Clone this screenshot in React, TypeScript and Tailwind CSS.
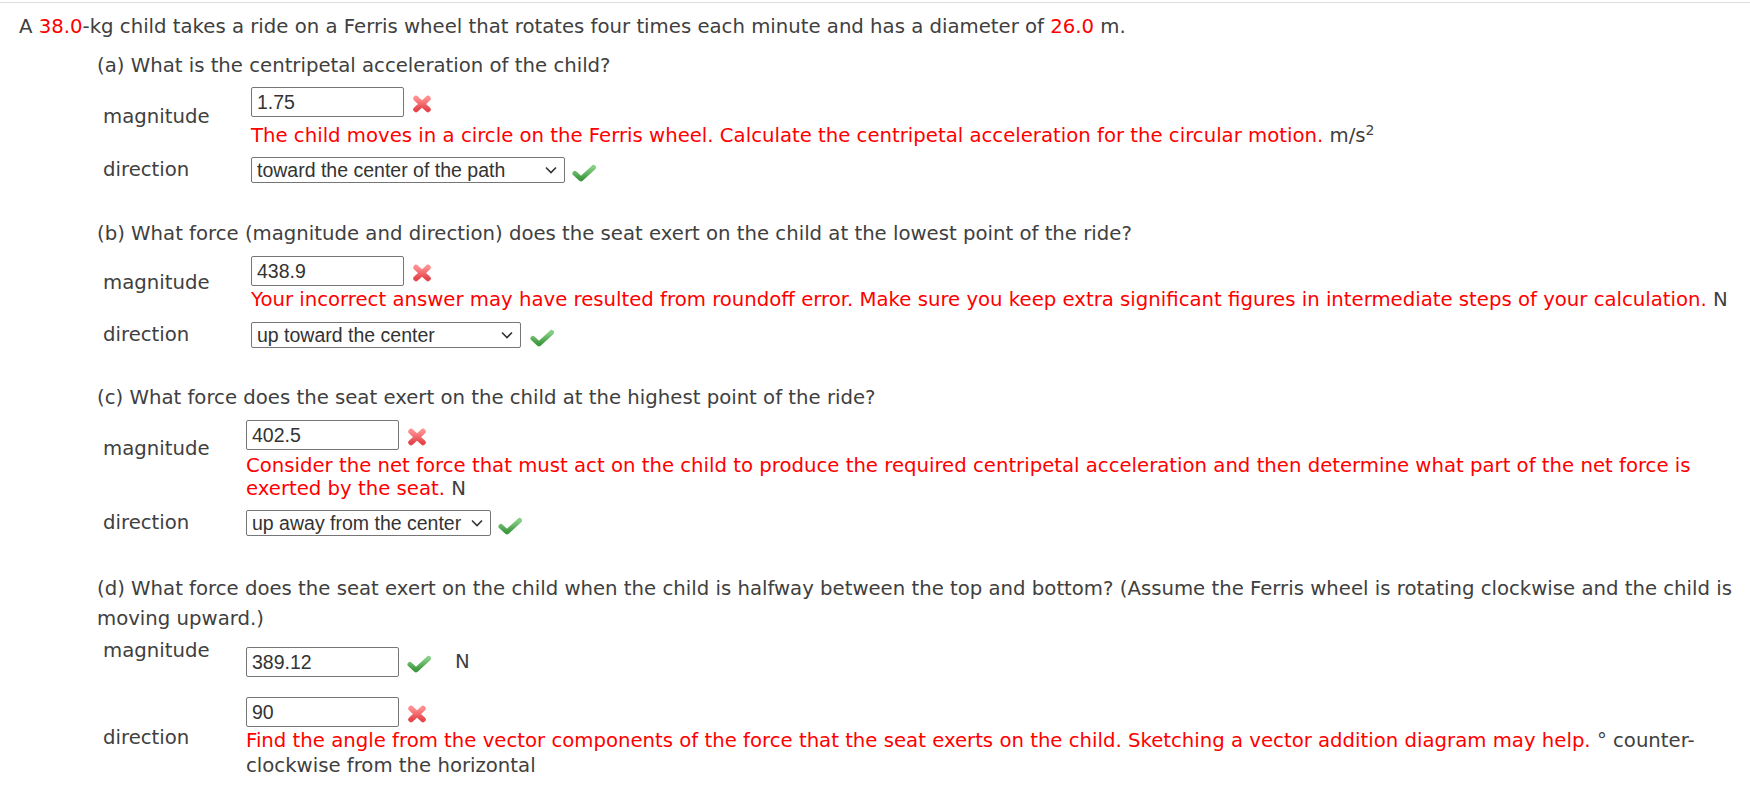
// little status marks that sit to the right of an answer box
function XMark({ className = '' }: { className?: string }) {
  return (
    <svg width="20" height="18" viewBox="0 0 20 18" className={`block shrink-0 ${className}`}>
      <defs>
        <linearGradient id="xg" x1="0" y1="0" x2="0" y2="1">
          <stop offset="0" stopColor="#ff8d8d" />
          <stop offset="1" stopColor="#e4464c" />
        </linearGradient>
      </defs>
      <path d="M4 3.5 L16 14.5 M16 3.5 L4 14.5" stroke="url(#xg)" strokeWidth="5.5" strokeLinecap="round" fill="none" />
    </svg>
  );
}

function CheckMark({ className = '' }: { className?: string }) {
  return (
    <svg width="24" height="18" viewBox="0 0 24 18" className={`block shrink-0 ${className}`}>
      <defs>
        <linearGradient id="cg" x1="0" y1="0" x2="0" y2="1">
          <stop offset="0" stopColor="#86cf86" />
          <stop offset="1" stopColor="#3e983e" />
        </linearGradient>
      </defs>
      <path d="M3 9.5 L9 15 L21.5 3.5" stroke="url(#cg)" strokeWidth="5" strokeLinecap="round" strokeLinejoin="round" fill="none" />
    </svg>
  );
}

function Chevron() {
  return (
    <svg width="12" height="8" viewBox="0 0 12 8" className="pointer-events-none absolute right-[8px] top-[9px]">
      <path d="M1 1.5 L6 6.5 L11 1.5" stroke="#333" strokeWidth="1.6" fill="none" />
    </svg>
  );
}

function Field({ value }: { value: string }) {
  return (
    <input
      readOnly
      value={value}
      className="block h-[30px] w-[153px] rounded-[2px] border border-[#767676] bg-white px-[5px] font-['Liberation_Sans',Arial,sans-serif] text-[19.5px] text-[#333] outline-none"
    />
  );
}

function Dropdown({ value, className }: { value: string; className: string }) {
  return (
    <div className="relative h-[26px]">
      <select
        defaultValue={value}
        className={`block h-[26px] appearance-none rounded-[2px] border border-[#767676] bg-white pl-[5px] pr-[22px] font-['Liberation_Sans',Arial,sans-serif] text-[19.5px] leading-[24px] text-[#333] outline-none ${className}`}
      >
        <option>{value}</option>
      </select>
      <Chevron />
    </div>
  );
}

const red = 'text-[#ff0000]';

export default function App() {
  return (
    <div className="min-h-screen bg-white font-['DejaVu_Sans',Verdana,sans-serif] text-[19.7px] leading-[22px] text-[#404040]">
      <div className="pt-[2px]">
        <div className="border-t border-[#dedede]" />
      </div>
      <div className="pl-[19px] pr-[8px]">
        <p className="mt-[9px] leading-[30px]">
          A <span className={red}>38.0</span>-kg child takes a ride on a Ferris wheel that rotates four times each minute and has a diameter of <span className={red}>26.0</span> m.
        </p>

        <div className="pl-[78px]">
          {/* (a) */}
          <p className="mt-[9px] leading-[30px]">(a) What is the centripetal acceleration of the child?</p>
          <div className="mt-[6px] flex items-start">
            <div className="w-[154px] shrink-0 pl-[6px] pt-[19px]">magnitude</div>
            <div>
              <div className="flex items-center gap-[8px]">
                <Field value="1.75" />
                <XMark className="mt-[4px]" />
              </div>
              <p className={`mt-[8px] ${red}`}>
                The child moves in a circle on the Ferris wheel. Calculate the centripetal acceleration for the circular motion.{' '}
                <span className="text-[#404040]">m/s<sup className="text-[14px]">2</sup></span>
              </p>
            </div>
          </div>
          <div className="mt-[10px] flex items-center">
            <div className="w-[154px] shrink-0 pl-[6px]">direction</div>
            <Dropdown value="toward the center of the path" className="w-[314px]" />
            <CheckMark className="ml-[7px] mt-[6px]" />
          </div>

          {/* (b) */}
          <p className="mt-[36px] leading-[30px]">(b) What force (magnitude and direction) does the seat exert on the child at the lowest point of the ride?</p>
          <div className="mt-[7px] flex items-start">
            <div className="w-[154px] shrink-0 pl-[6px] pt-[16px]">magnitude</div>
            <div>
              <div className="flex items-center gap-[8px]">
                <Field value="438.9" />
                <XMark className="mt-[4px]" />
              </div>
              <p className={`mt-[3px] whitespace-nowrap ${red}`}>
                Your incorrect answer may have resulted from roundoff error. Make sure you keep extra significant figures in intermediate steps of your calculation.{' '}
                <span className="text-[#404040]">N</span>
              </p>
            </div>
          </div>
          <div className="mt-[11px] flex items-center">
            <div className="w-[154px] shrink-0 pl-[6px]">direction</div>
            <Dropdown value="up toward the center" className="w-[270px]" />
            <CheckMark className="ml-[9px] mt-[6px]" />
          </div>

          {/* (c) */}
          <p className="mt-[35px] leading-[30px]">(c) What force does the seat exert on the child at the highest point of the ride?</p>
          <div className="mt-[7px] flex items-start">
            <div className="w-[149px] shrink-0 pl-[6px] pt-[18px]">magnitude</div>
            <div>
              <div className="flex items-center gap-[8px]">
                <Field value="402.5" />
                <XMark className="mt-[4px]" />
              </div>
              <p className={`mt-[4px] leading-[23px] ${red}`}>
                Consider the net force that must act on the child to produce the required centripetal acceleration and then determine what part of the net force is exerted by the seat.{' '}
                <span className="text-[#404040]">N</span>
              </p>
            </div>
          </div>
          <div className="mt-[10px] flex items-center">
            <div className="w-[149px] shrink-0 pl-[6px]">direction</div>
            <Dropdown value="up away from the center" className="w-[245px]" />
            <CheckMark className="ml-[7px] mt-[6px]" />
          </div>

          {/* (d) */}
          <p className="mt-[38px] leading-[30px]">
            (d) What force does the seat exert on the child when the child is halfway between the top and bottom? (Assume the Ferris wheel is rotating clockwise and the child is moving upward.)
          </p>
          <div className="mt-[6px] flex items-start">
            <div className="w-[149px] shrink-0 pl-[6px]">magnitude</div>
            <div className="mt-[7px] flex items-center">
              <Field value="389.12" />
              <CheckMark className="ml-[8px] mt-[4px]" />
              <span className="ml-[24px]">N</span>
            </div>
          </div>
          <div className="mt-[20px] flex items-start">
            <div className="w-[149px] shrink-0 pl-[6px] pt-[30px]">direction</div>
            <div>
              <div className="flex items-center gap-[8px]">
                <Field value="90" />
                <XMark className="mt-[4px]" />
              </div>
              <p className={`mt-[1px] leading-[25px] ${red}`}>
                Find the angle from the vector components of the force that the seat exerts on the child. Sketching a vector addition diagram may help.{' '}
                <span className="text-[#404040]">° counter-clockwise from the horizontal</span>
              </p>
            </div>
          </div>
        </div>
      </div>
    </div>
  );
}
